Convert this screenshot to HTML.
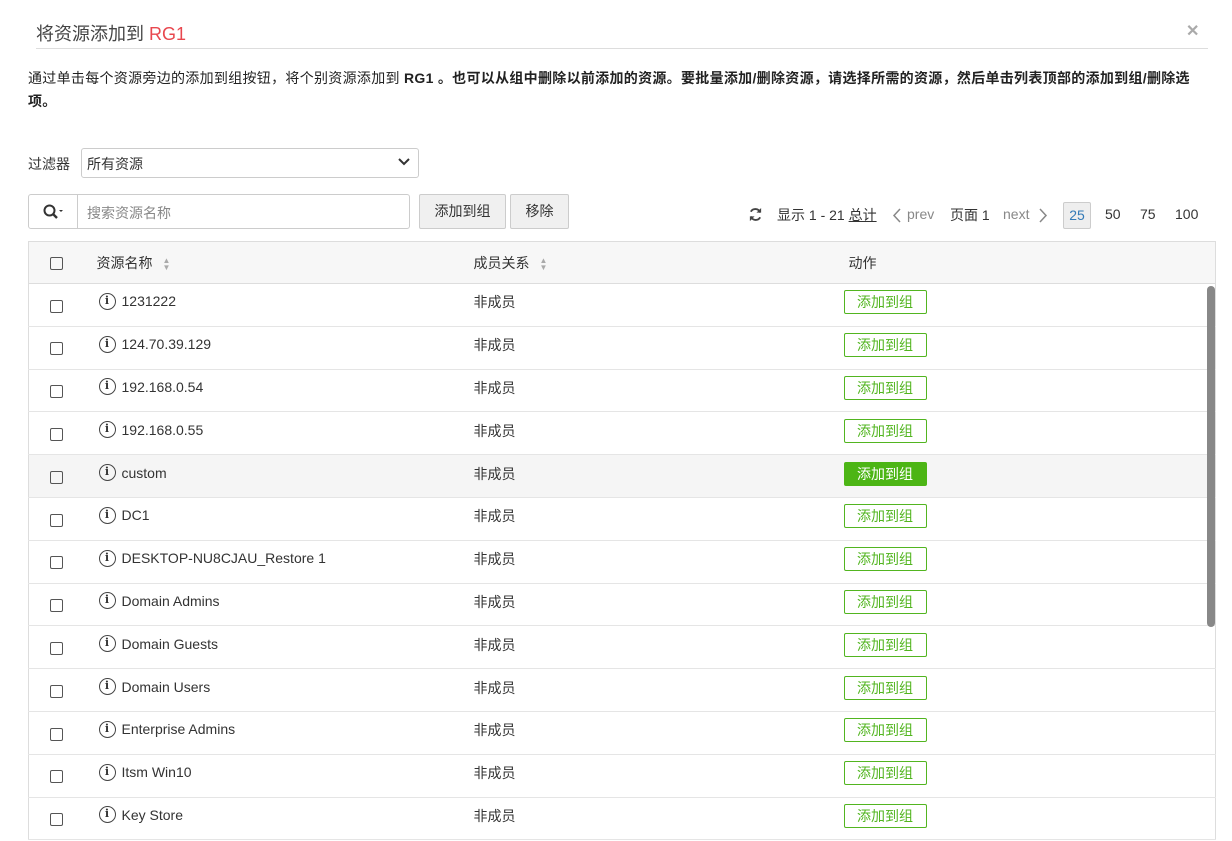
<!DOCTYPE html>
<html><head><meta charset="utf-8"><style>
*{box-sizing:border-box;margin:0;padding:0}
body{width:1232px;height:841px;overflow:hidden;background:#fff;font-family:"Liberation Sans","Noto Sans CJK SC",sans-serif;color:#333;font-size:14px;position:relative}
.abs{position:absolute}
.title{left:36px;top:20px;font-size:18px;color:#444}
.title span{color:#e8474e}
.hline{left:36px;top:48px;width:1172px;height:1px;background:#ddd}
.close{left:1186px;top:21px;font-size:16px;color:#aaa;font-weight:bold}
.desc{left:28px;top:67px;width:1200px;font-size:14px;line-height:23px;color:#222;letter-spacing:0.3px;white-space:nowrap}
.sel{left:81px;top:148px;width:338px;height:30px;border:1px solid #ccc;border-radius:3px;padding:5px 5px;font-size:14px}
.search{left:28px;top:194px;width:382px;height:35px;border:1px solid #ccc;border-radius:3px}
.btn{height:35px;border:1px solid #ccc;background:#f0f0f0;border-radius:2px;font-size:14px;line-height:33px;text-align:center}
table{position:absolute;left:28px;top:241px;width:1188px;border-collapse:collapse;border:1px solid #ddd}
th{background:#f7f7f7;height:42px;font-weight:normal;text-align:left;border-bottom:1px solid #ddd;font-size:14px}
td{height:42.8px;border-bottom:1px solid #e5e5e5;font-size:14px;padding-bottom:5px}
.cb{display:inline-block;width:13px;height:13px;border:1px solid #555;border-radius:2px;margin-left:21px;vertical-align:middle}
td:first-child{padding-bottom:0;padding-top:0}
.nm{display:inline-flex;align-items:center;position:relative;top:-2px}
.info{display:inline-block;width:17px;height:17px;border:1.5px solid #444;border-radius:50%;font-size:11px;text-align:center;line-height:14px;font-family:"DejaVu Serif",serif;font-weight:bold;margin:0 6px 0 2px}
.ab{display:inline-block;width:83px;height:24px;border:1px solid #52b520;color:#52b520;border-radius:2px;text-align:center;line-height:22px;font-size:14px;margin-left:-5px}
.hl td{background:#f5f5f5}
.hl .ab{background:#4cb515;color:#fff;border-color:#4cb515}
.sort{display:inline-block;margin-left:10px;vertical-align:middle;font-size:8px;line-height:7px;color:#aaa}
</style></head><body>
<div class="abs title">将资源添加到 <span>RG1</span></div>
<div class="abs hline"></div>
<div class="abs close">✕</div>
<div class="abs desc">通过单击每个资源旁边的添加到组按钮，将个别资源添加到 <b>RG1 。也可以从组中删除以前添加的资源。要批量添加/删除资源，请选择所需的资源，然后单击列表顶部的添加到组/删除选<br>项。</b></div>
<div class="abs" style="left:28px;top:154px;font-size:14px">过滤器</div>
<div class="abs sel">所有资源<svg style="position:absolute;right:8px;top:9px" width="12" height="8" viewBox="0 0 12 8"><path d="M1 1l5 5 5-5" stroke="#333" stroke-width="2" fill="none"/></svg></div>
<div class="abs search"><div style="position:absolute;left:48px;top:0;width:1px;height:33px;background:#ccc"></div>
<svg style="position:absolute;left:14px;top:9px" width="20" height="16" viewBox="0 0 20 16"><circle cx="6.5" cy="6.5" r="5" stroke="#333" stroke-width="2" fill="none"/><path d="M10 10l4 4" stroke="#333" stroke-width="2.4"/><path d="M16 6l2 2 2-2z" fill="#333"/></svg>
<span style="position:absolute;left:58px;top:8px;color:#888">搜索资源名称</span></div>
<div class="abs btn" style="left:419px;top:194px;width:87px">添加到组</div>
<div class="abs btn" style="left:510px;top:194px;width:59px">移除</div>
<svg class="abs" style="left:748px;top:207px" width="15" height="15" viewBox="0 0 16 16"><path d="M13 6A5.5 5.5 0 0 0 3 5M3 10a5.5 5.5 0 0 0 10 1" stroke="#444" stroke-width="2" fill="none"/><path d="M14 1v5h-5zM2 15v-5h5z" fill="#444"/></svg>
<div class="abs" style="left:777px;top:205px;font-size:14px">显示 1 - 21 <u>总计</u></div>
<svg class="abs" style="left:892px;top:208px" width="9" height="15" viewBox="0 0 9 15"><path d="M8 1L2 7.5 8 14" stroke="#888" stroke-width="1.5" fill="none"/></svg>
<div class="abs" style="left:907px;top:206px;color:#888">prev</div>
<div class="abs" style="left:950px;top:205px">页面 1</div>
<div class="abs" style="left:1003px;top:206px;color:#888">next</div>
<svg class="abs" style="left:1039px;top:208px" width="9" height="15" viewBox="0 0 9 15"><path d="M1 1l6 6.5L1 14" stroke="#888" stroke-width="1.5" fill="none"/></svg>
<div class="abs" style="left:1063px;top:202px;width:28px;height:27px;border:1px solid #ccc;background:#eee;border-radius:2px;color:#337ab7;text-align:center;line-height:25px">25</div>
<div class="abs" style="left:1105px;top:206px">50</div>
<div class="abs" style="left:1140px;top:206px">75</div>
<div class="abs" style="left:1175px;top:206px">100</div>
<table>
<tr><th style="width:68px"><span class="cb"></span></th><th style="width:377px">资源名称<span class="sort">▲<br>▼</span></th><th style="width:375px">成员关系<span class="sort">▲<br>▼</span></th><th>动作</th></tr>
<tr><td><span class="cb"></span></td><td><span class="nm"><span class="info">i</span>1231222</span></td><td>非成员</td><td><span class="ab">添加到组</span></td></tr>
<tr><td><span class="cb"></span></td><td><span class="nm"><span class="info">i</span>124.70.39.129</span></td><td>非成员</td><td><span class="ab">添加到组</span></td></tr>
<tr><td><span class="cb"></span></td><td><span class="nm"><span class="info">i</span>192.168.0.54</span></td><td>非成员</td><td><span class="ab">添加到组</span></td></tr>
<tr><td><span class="cb"></span></td><td><span class="nm"><span class="info">i</span>192.168.0.55</span></td><td>非成员</td><td><span class="ab">添加到组</span></td></tr>
<tr class="hl"><td><span class="cb"></span></td><td><span class="nm"><span class="info">i</span>custom</span></td><td>非成员</td><td><span class="ab">添加到组</span></td></tr>
<tr><td><span class="cb"></span></td><td><span class="nm"><span class="info">i</span>DC1</span></td><td>非成员</td><td><span class="ab">添加到组</span></td></tr>
<tr><td><span class="cb"></span></td><td><span class="nm"><span class="info">i</span>DESKTOP-NU8CJAU_Restore 1</span></td><td>非成员</td><td><span class="ab">添加到组</span></td></tr>
<tr><td><span class="cb"></span></td><td><span class="nm"><span class="info">i</span>Domain Admins</span></td><td>非成员</td><td><span class="ab">添加到组</span></td></tr>
<tr><td><span class="cb"></span></td><td><span class="nm"><span class="info">i</span>Domain Guests</span></td><td>非成员</td><td><span class="ab">添加到组</span></td></tr>
<tr><td><span class="cb"></span></td><td><span class="nm"><span class="info">i</span>Domain Users</span></td><td>非成员</td><td><span class="ab">添加到组</span></td></tr>
<tr><td><span class="cb"></span></td><td><span class="nm"><span class="info">i</span>Enterprise Admins</span></td><td>非成员</td><td><span class="ab">添加到组</span></td></tr>
<tr><td><span class="cb"></span></td><td><span class="nm"><span class="info">i</span>Itsm Win10</span></td><td>非成员</td><td><span class="ab">添加到组</span></td></tr>
<tr><td><span class="cb"></span></td><td><span class="nm"><span class="info">i</span>Key Store</span></td><td>非成员</td><td><span class="ab">添加到组</span></td></tr>
</table>
<div class="abs" style="left:1207px;top:286px;width:8px;height:341px;background:#888;border-radius:4px"></div>
</body></html>
